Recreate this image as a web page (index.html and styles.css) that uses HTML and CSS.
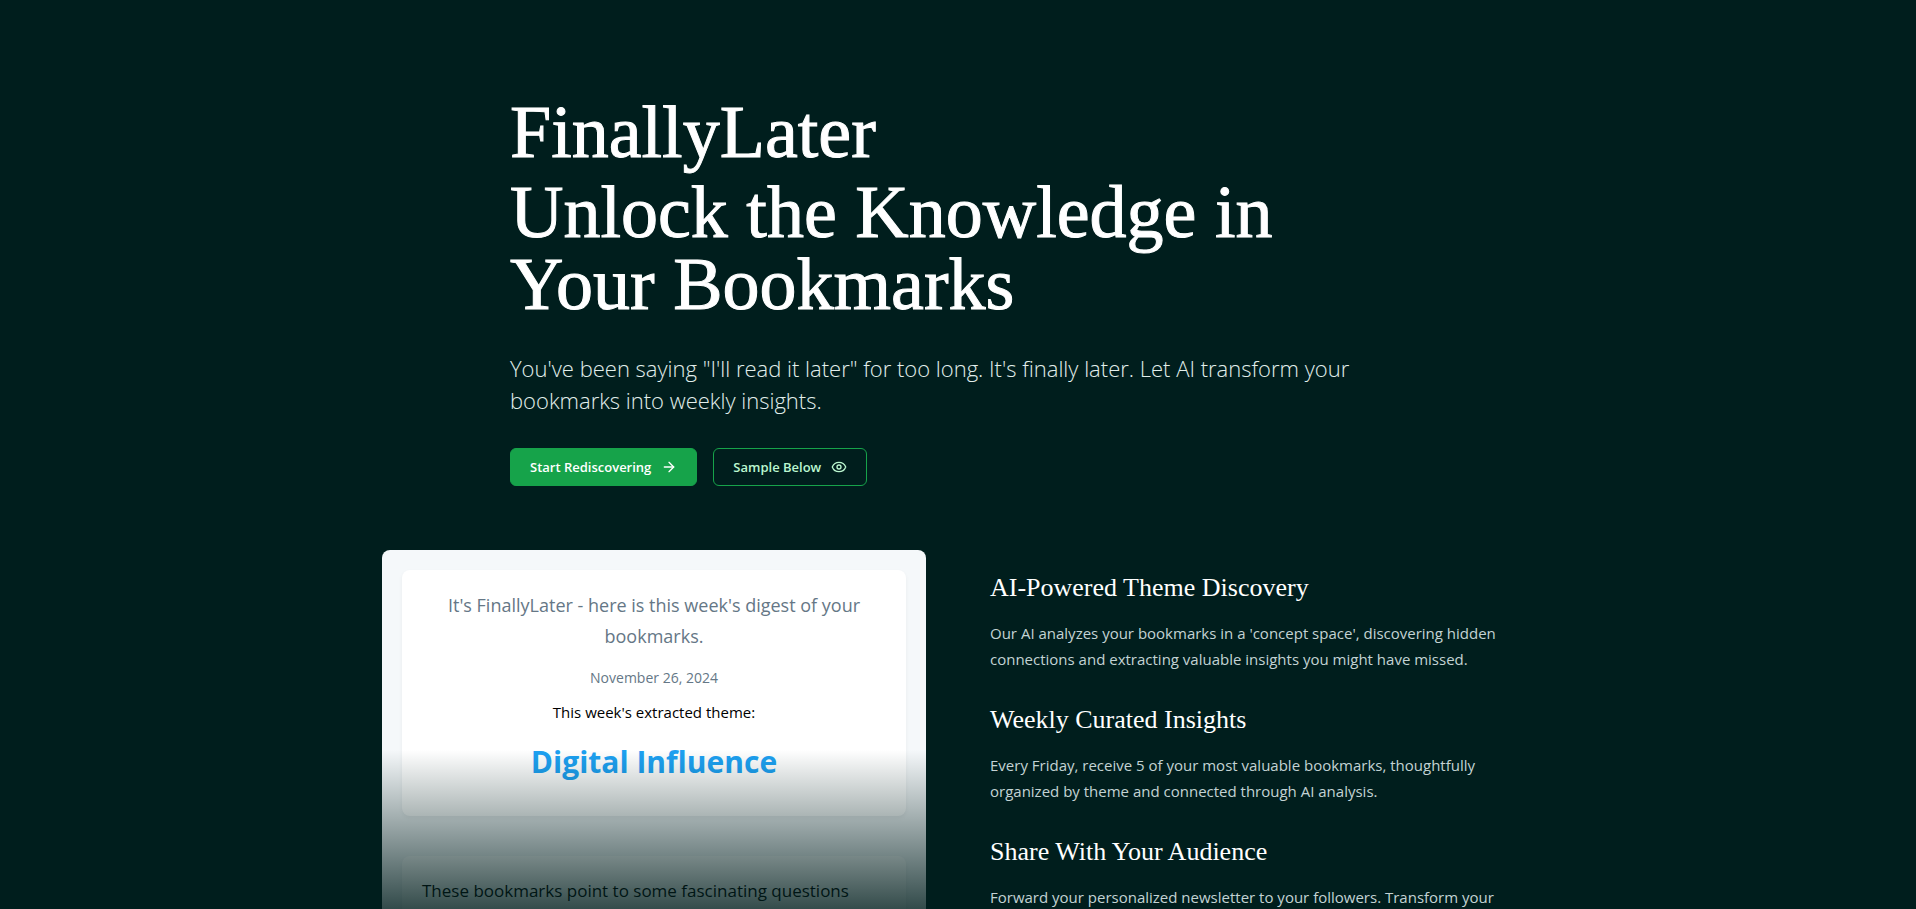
FILE: index.html
```html
<!DOCTYPE html>
<html lang="en">

<head>
    <meta charset="UTF-8">
    <meta name="viewport" content="width=device-width, initial-scale=1.0">
    <title>FinallyLater</title>
    <link rel="stylesheet" href="styles.css">
</head>

<body>
    <main class="page">
        <!-- Hero -->
        <section class="hero">
            <h1 class="hero-title">FinallyLater</h1>
            <h2 class="hero-title">Unlock the Knowledge in Your Bookmarks</h2>
            <p class="hero-lead">You've been saying "I'll read it later" for too long. It's finally later. Let AI transform your bookmarks into weekly insights.</p>
            <div class="hero-actions">
                <button type="button" class="btn btn-primary">
                    Start Rediscovering
                    <svg class="icon" viewBox="0 0 24 24" aria-hidden="true">
                        <path d="M5 12h14" />
                        <path d="m12 5 7 7-7 7" />
                    </svg>
                </button>
                <a href="#sample" class="btn btn-outline">
                    Sample Below
                    <svg class="icon" viewBox="0 0 24 24" aria-hidden="true">
                        <path d="M2.062 12.348a1 1 0 0 1 0-.696 10.75 10.75 0 0 1 19.876 0 1 1 0 0 1 0 .696 10.75 10.75 0 0 1-19.876 0" />
                        <circle cx="12" cy="12" r="3" />
                    </svg>
                </a>
            </div>
        </section>

        <section class="overview">
            <!-- Left column: newsletter sample -->
            <div class="sample" id="sample">
                <div class="sample-card sample-header">
                    <p class="sample-intro">It's FinallyLater - here is this week's digest of your bookmarks.</p>
                    <p class="sample-date">November 26, 2024</p>
                    <p class="sample-label">This week's extracted theme:</p>
                    <h3 class="sample-theme">Digital Influence</h3>
                </div>
                <div class="sample-card">
                    <p class="sample-text">These bookmarks point to some fascinating questions</p>
                </div>
            </div>

            <!-- Right column: features -->
            <div class="features">
                <article class="feature">
                    <h3 class="feature-title">AI-Powered Theme Discovery</h3>
                    <p class="feature-text">Our AI analyzes your bookmarks in a 'concept space', discovering hidden connections and extracting valuable insights you might have missed.</p>
                </article>
                <article class="feature">
                    <h3 class="feature-title">Weekly Curated Insights</h3>
                    <p class="feature-text">Every Friday, receive 5 of your most valuable bookmarks, thoughtfully organized by theme and connected through AI analysis.</p>
                </article>
                <article class="feature">
                    <h3 class="feature-title">Share With Your Audience</h3>
                    <p class="feature-text">Forward your personalized newsletter to your followers. Transform your</p>
                </article>
            </div>
        </section>
    </main>
</body>

</html>
```

FILE: styles.css
```css
* {
    box-sizing: border-box;
}

body {
    margin: 0;
    background-color: #001e1d;
    color: #fff;
    font-family: "Segoe UI", "Open Sans", sans-serif;
}

h1,
h2,
h3,
p {
    margin: 0;
}

.page {
    max-width: 1184px;
    margin: 0 auto;
    padding: 96px 16px;
}

/* Hero */
.hero {
    max-width: 896px;
    margin: 0 auto 64px;
}

.hero-title {
    font-family: Georgia, "Liberation Serif", serif;
    font-size: 74px;
    font-weight: 400;
    line-height: 72px;
    margin-bottom: 8px;
    -webkit-text-stroke: 1px currentColor;
}

.hero-lead {
    margin: 32px 0;
    font-size: 22px;
    font-weight: 300;
    line-height: 32px;
    color: #e2efec;
}

.hero-actions {
    display: flex;
    gap: 16px;
}

.btn {
    display: inline-flex;
    align-items: center;
    gap: 10px;
    height: 38px;
    padding: 0 19px;
    border: 1px solid #16a34a;
    border-radius: 6px;
    font-family: inherit;
    font-size: 13px;
    font-weight: 600;
    text-decoration: none;
}

.btn-primary {
    background-color: #16a34a;
    color: #fff;
}

.btn-outline {
    color: #bbf7d0;
}

.icon {
    width: 16px;
    height: 16px;
    fill: none;
    stroke: currentColor;
    stroke-width: 2;
    stroke-linecap: round;
    stroke-linejoin: round;
}

/* Sample and features */
.overview {
    display: grid;
    grid-template-columns: 1fr 1fr;
    gap: 64px;
    align-items: start;
}

.sample {
    position: relative;
    height: 400px;
    padding: 20px;
    overflow: hidden;
    border-radius: 8px;
    background-color: #f5f8fa;
    color: #000;
}

/* Fades the newsletter into the page */
.sample::after {
    content: "";
    position: absolute;
    inset: auto 0 0;
    height: 200px;
    background: linear-gradient(transparent, #001e1d);
}

.sample-card {
    padding: 20px;
    margin-bottom: 40px;
    border-radius: 8px;
    background-color: #fff;
    box-shadow: 0 2px 4px rgba(0, 0, 0, 0.05);
}

.sample-header {
    height: 246px;
    text-align: center;
}

.sample-intro {
    font-size: 18px;
    line-height: 31px;
    color: #657786;
}

.sample-date {
    margin-top: 14px;
    font-size: 14px;
    line-height: 24px;
    color: #657786;
}

.sample-label {
    margin-top: 8px;
    font-size: 15px;
    line-height: 28px;
}

.sample-theme {
    margin-top: 12px;
    font-size: 30px;
    font-weight: 700;
    line-height: 48px;
    color: #1da1f2;
}

.sample-text {
    font-size: 17px;
    line-height: 29px;
}

.features {
    display: flex;
    flex-direction: column;
    gap: 32px;
    padding-top: 22px;
}

.feature-title {
    margin-bottom: 16px;
    font-family: Georgia, "Liberation Serif", serif;
    font-size: 26px;
    font-weight: 400;
    line-height: 32px;
}

.feature-text {
    font-size: 15px;
    line-height: 26px;
    color: #c3d3d4;
}
```
